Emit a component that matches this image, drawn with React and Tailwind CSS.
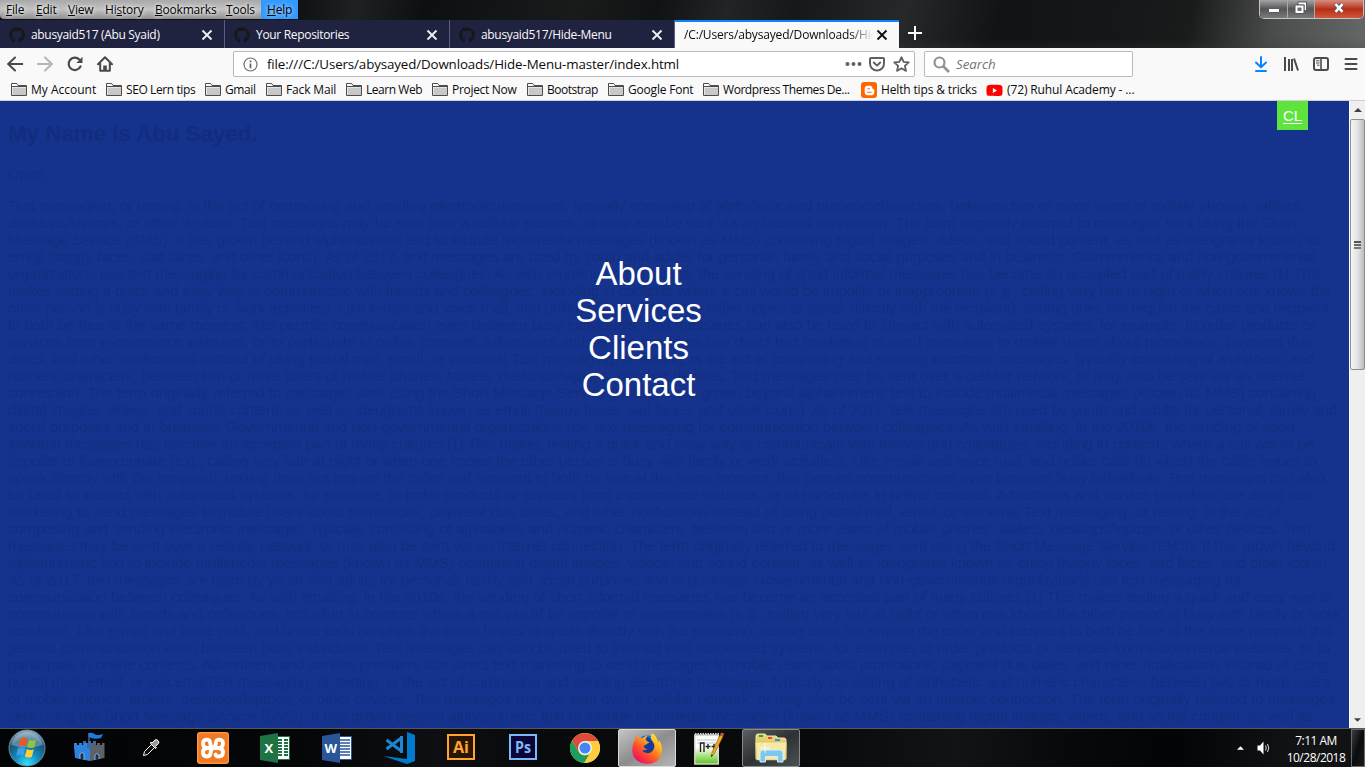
import React from "react";
import { FaGithub, FaYoutube, FaBloggerB } from "react-icons/fa";

const UI = "font-['Open_Sans','Noto_Sans',sans-serif]";

const menus = [
  ["", "F", "ile", "w-[30px]"],
  ["", "E", "dit", "w-[32px]"],
  ["", "V", "iew", "w-[37px]"],
  ["Hi", "s", "tory", "w-[50px]"],
  ["", "B", "ookmarks", "w-[71px]"],
  ["", "T", "ools", "w-[35px]"],
];

const tabs = ["abusyaid517 (Abu Syaid)", "Your Repositories", "abusyaid517/Hide-Menu"];

const bookmarks = [
  ["folder", "My Account", "w-[95px]", "tracking-[0px]"],
  ["folder", "SEO Lern tips", "w-[99px]", "tracking-[-0.4px]"],
  ["folder", "Gmail", "w-[61px]", "tracking-[-0.4px]"],
  ["folder", "Fack Mail", "w-[80px]", "tracking-[-0.15px]"],
  ["folder", "Learn Web", "w-[86px]", "tracking-[-0.45px]"],
  ["folder", "Project Now", "w-[95px]", "tracking-[-0.3px]"],
  ["folder", "Bootstrap", "w-[81px]", "tracking-[-0.5px]"],
  ["folder", "Google Font", "w-[95px]", "tracking-[-0.2px]"],
  ["folder", "Wordpress Themes De...", "w-[158px]", "tracking-[-0.45px]"],
  ["blogger", "Helth tips & tricks", "w-[125px]", "tracking-[-0.15px]"],
  ["youtube", "(72) Ruhul Academy - ...", "w-[160px]", "tracking-[-0.12px]"],
];

// [text, rendered width]
const lines = [
  ["Text messaging, or texting, is the act of composing and sending electronic messages, typically consisting of alphabetic and numeric characters, between two or more users of mobile phones, tablets,", 1295],
  ["desktops/laptops, or other devices. Text messages may be sent over a cellular network, or may also be sent via an Internet connection. The term originally referred to messages sent using the Short", 1289],
  ["Message Service (SMS). It has grown beyond alphanumeric text to include multimedia messages (known as MMS) containing digital images, videos, and sound content, as well as ideograms known as", 1313],
  ["emoji (happy faces, sad faces, and other icons). As of 2017, text messages are used by youth and adults for personal, family and social purposes and in business. Governmental and non-governmental", 1308],
  ["organizations use text messaging for communication between colleagues. As with emailing, in the 2010s, the sending of short informal messages has become an accepted part of many cultures.[1] This", 1313],
  ["makes texting a quick and easy way to communicate with friends and colleagues, including in contexts where a call would be impolite or inappropriate (e.g., calling very late at night or when one knows the", 1323],
  ["other person is busy with family or work activities). Like e-mail and voice mail, and unlike calls (in which the caller hopes to speak directly with the recipient), texting does not require the caller and recipient", 1321],
  ["to both be free at the same moment; this permits communication even between busy individuals. Text messages can also be used to interact with automated systems, for example, to order products or", 1307],
  ["services from e-commerce websites, or to participate in online contests. Advertisers and service providers use direct text marketing to send messages to mobile users about promotions, payment due", 1304],
  ["dates, and other notifications instead of using postal mail, email, or voicemai Text messaging, or texting, is the act of composing and sending electronic messages, typically consisting of alphabetic and", 1306],
  ["numeric characters, between two or more users of mobile phones, tablets, desktops/laptops, or other devices. Text messages may be sent over a cellular network, or may also be sent via an Internet", 1297],
  ["connection. The term originally referred to messages sent using the Short Message Service (SMS). It has grown beyond alphanumeric text to include multimedia messages (known as MMS) containing", 1308],
  ["digital images, videos, and sound content, as well as ideograms known as emoji (happy faces, sad faces, and other icons). As of 2017, text messages are used by youth and adults for personal, family and", 1329],
  ["social purposes and in business. Governmental and non-governmental organizations use text messaging for communication between colleagues. As with emailing, in the 2010s, the sending of short", 1287],
  ["informal messages has become an accepted part of many cultures.[1] This makes texting a quick and easy way to communicate with friends and colleagues, including in contexts where a call would be", 1306],
  ["impolite or inappropriate (e.g., calling very late at night or when one knows the other person is busy with family or work activities). Like e-mail and voice mail, and unlike calls (in which the caller hopes to", 1309],
  ["speak directly with the recipient), texting does not require the caller and recipient to both be free at the same moment; this permits communication even between busy individuals. Text messages can also", 1317],
  ["be used to interact with automated systems, for example, to order products or services from e-commerce websites, or to participate in online contests. Advertisers and service providers use direct text", 1304],
  ["marketing to send messages to mobile users about promotions, payment due dates, and other notifications instead of using postal mail, email, or voicemai Text messaging, or texting, is the act of", 1273],
  ["composing and sending electronic messages, typically consisting of alphabetic and numeric characters, between two or more users of mobile phones, tablets, desktops/laptops, or other devices. Text", 1303],
  ["messages may be sent over a cellular network, or may also be sent via an Internet connection. The term originally referred to messages sent using the Short Message Service (SMS). It has grown beyond", 1327],
  ["alphanumeric text to include multimedia messages (known as MMS) containing digital images, videos, and sound content, as well as ideograms known as emoji (happy faces, sad faces, and other icons).", 1323],
  ["As of 2017, text messages are used by youth and adults for personal, family and social purposes and in business. Governmental and non-governmental organizations use text messaging for", 1234],
  ["communication between colleagues. As with emailing, in the 2010s, the sending of short informal messages has become an accepted part of many cultures.[1] This makes texting a quick and easy way to", 1324],
  ["communicate with friends and colleagues, including in contexts where a call would be impolite or inappropriate (e.g., calling very late at night or when one knows the other person is busy with family or work", 1332],
  ["activities). Like e-mail and voice mail, and unlike calls (in which the caller hopes to speak directly with the recipient), texting does not require the caller and recipient to both be free at the same moment; this", 1325],
  ["permits communication even between busy individuals. Text messages can also be used to interact with automated systems, for example, to order products or services from e-commerce websites, or to", 1322],
  ["participate in online contests. Advertisers and service providers use direct text marketing to send messages to mobile users about promotions, payment due dates, and other notifications instead of using", 1320],
  ["postal mail, email, or voicemaiText messaging, or texting, is the act of composing and sending electronic messages, typically consisting of alphabetic and numeric characters, between two or more users", 1322],
  ["of mobile phones, tablets, desktops/laptops, or other devices. Text messages may be sent over a cellular network, or may also be sent via an Internet connection. The term originally referred to messages", 1327],
  ["sent using the Short Message Service (SMS). It has grown beyond alphanumeric text to include multimedia messages (known as MMS) containing digital images, videos, and sound content, as well as", 1305],
  ["ideograms known as emoji (happy faces, sad faces, and other icons). As of 2017, text messages are used by youth and adults for personal, family and social purposes and in business. Governmental and", 1320],
];

function CloseX({ color }) {
  return (
    <svg width="12" height="12" viewBox="0 0 12 12" className="shrink-0">
      <path d="M1.5 1.5l9 9M10.5 1.5l-9 9" stroke={color} strokeWidth="1.9" fill="none" />
    </svg>
  );
}

function Folder() {
  return (
    <svg width="16" height="16" viewBox="0 0 16 16" className="shrink-0">
      <path d="M.5 13.5V1.5h5.2l1.3 2h8.500v10z" fill="#fff" stroke="#4c4c4c" />
      <path d="M1.500 5.500h13.500v7.500h-13.500z" fill="#c8c8c8" />
      <path d="M.5 4.500h15" stroke="#4c4c4c" />
    </svg>
  );
}

function WindowButtons() {
  return (
    <div className="flex h-[19px] w-[105px] overflow-hidden rounded-b-[5px] border border-t-0 border-[#c4c4c4] bg-[#222]">
      <div className="flex w-[28px] items-end justify-center border-r border-[#aaa] bg-linear-to-b from-[#a5a5a5] via-[#555] to-[#7a7a7a] pb-[5px]">
        <div className="h-[5px] w-[12px] rounded-[1px] border border-[#555866] bg-white" />
      </div>
      <div className="flex w-[27px] items-center justify-center border-r border-[#aaa] bg-linear-to-b from-[#a5a5a5] via-[#555] to-[#7a7a7a]">
        <svg width="14" height="14" viewBox="0 0 14 14" className="mb-[2px]">
          <path d="M4 1h8.500v8.500H10V4H4z" fill="#fff" stroke="#555866" />
          <rect x="1" y="4" width="9" height="8.500" fill="#fff" stroke="#555866" />
          <rect x="4" y="7" width="3" height="2.500" fill="#777" stroke="#555866" strokeWidth=".8" />
        </svg>
      </div>
      <div className="flex flex-1 items-center justify-center bg-linear-to-b from-[#d58c80] via-[#b52c12] to-[#d0563a]">
        <svg width="12" height="12" viewBox="0 0 14 13" className="mb-[3px]">
          <path d="M3 2l8 9M11 2l-8 9" stroke="#555866" strokeWidth="5" />
          <path d="M3 2l8 9M11 2l-8 9" stroke="#fff" strokeWidth="3" />
        </svg>
      </div>
    </div>
  );
}

function TitleArea() {
  return (
    <div className="flex h-[48px] shrink-0 flex-col bg-[linear-gradient(100deg,#0b0f10_0%,#0b0f10_21%,#1e2121_26%,#0c1011_31%,#191b1b_42%,#101313_48%,#222426_53%,#15181a_58%,#262829_66%,#101415_73%,#141819_82%,#1a1b1b_87%,#4a4c4c_93%,#666868_100%)] shadow-[inset_0_-10px_8px_-6px_rgba(60,60,60,0.3)]">
      <div className="flex h-[20px] items-start justify-between">
        <div className={`${UI} flex h-[19px] text-[12px] leading-[19px] tracking-[-0.2px] text-black`}>
          <div className="flex w-[261px] rounded-bl-[4px] bg-linear-to-b from-[#a9a9a9] via-[#c2c2c2] to-[#8e8e8e] pl-[6px] [text-shadow:0_0_5px_#fff,0_0_3px_#ddd]">
            {menus.map(([pre, key, rest, w]) => (
              <div key={key} className={`${w} shrink-0 whitespace-nowrap`}>
                {pre}
                <span className="underline">{key}</span>
                {rest}
              </div>
            ))}
          </div>
          <div className="w-[37px] bg-[#3399ff] pl-[6px] [text-shadow:0_0_5px_#fff]">
            <span className="underline">H</span>elp
          </div>
        </div>
        <div className="pr-px">
          <WindowButtons />
        </div>
      </div>
      <div className={`${UI} flex h-[28px] text-[12px]`}>
        {tabs.map((t) => (
          <div key={t} className="flex w-[225px] items-center border-r border-[#5d5f7c] bg-[#202340] pt-px pr-[11px] pl-[9px] text-[#f9f9fa]">
            <FaGithub size={16} color="#17171b" className="mr-[6px]" />
            <span className="flex-1 text-[12px] font-medium tracking-[-0.32px] whitespace-nowrap">{t}</span>
            <CloseX color="#f0f0f4" />
          </div>
        ))}
        <div className="flex w-[224px] items-center border-t-2 border-[#0a84ff] bg-[#f9f9fa] pr-[11px] pl-[9px]">
          <span className="mr-[3px] flex-1 overflow-hidden mask-r-from-88% text-[12px] tracking-[-0.16px] whitespace-nowrap text-[#0c0c0d]">/C:/Users/abysayed/Downloads/Hide-Menu</span>
          <CloseX color="#111" />
        </div>
        <svg width="30" height="28" viewBox="0 0 30 28">
          <path d="M16 6v14M9 13h14" stroke="#fff" strokeWidth="2" />
        </svg>
      </div>
    </div>
  );
}

function Toolbar() {
  const s = { fill: "none", stroke: "#4a4a4d", strokeWidth: 2, strokeLinecap: "round", strokeLinejoin: "round" };
  return (
    <div className={`${UI} flex h-[53px] shrink-0 flex-col border-b border-[#d0d0d0] bg-[#f9f9fa]`}>
      <div className="flex h-[32px] items-center">
        <div className="flex w-[233px] items-center gap-[14px] pl-[7px]">
          <svg width="16" height="16" viewBox="0 0 16 16"><path d="M15.500 8H1M8 1.500L1.200 8 8 14.500" {...s} /></svg>
          <svg width="16" height="16" viewBox="0 0 16 16"><path d="M.5 8H15M8 1.500L14.800 8 8 14.500" {...s} stroke="#b4b4b6" /></svg>
          <svg width="16" height="16" viewBox="0 0 16 16">
            <path d="M13.500 10.500A6.200 6.200 0 1 1 12.300 3.500" {...s} strokeWidth="2.200" />
            <path d="M15.500.8v6.200H9.300z" fill="#4a4a4d" />
          </svg>
          <svg width="16" height="16" viewBox="0 0 16 16">
            <path d="M1 8.200L8 1.200l7 7M3.200 7.500v7.300h9.600V7.500" {...s} />
            <path d="M6.200 14.500v-5h3.600v5z" fill="#4a4a4d" />
          </svg>
        </div>
        <div className="flex h-[26px] w-[682px] items-center rounded-[2px] border border-[#b9b9bb] bg-white pr-[4px] pl-[9px]">
          <svg width="15" height="15" viewBox="0 0 15 15">
            <circle cx="7.500" cy="7.500" r="6.500" fill="none" stroke="#707073" strokeWidth="1.200" />
            <path d="M7.500 6.500v4.800M7.500 3.500v1.700" stroke="#606063" strokeWidth="1.700" />
          </svg>
          <span className="ml-[9px] flex-1 pt-[2px] text-[13.33px] tracking-[-0.12px] whitespace-nowrap text-[#0c0c0d]">file:///C:/Users/abysayed/Downloads/Hide-Menu-master/index.html</span>
          <svg width="17" height="16" viewBox="0 0 17 16" className="mr-[7px]">
            <g fill="#606063"><circle cx="2.500" cy="8" r="2" /><circle cx="8.500" cy="8" r="2" /><circle cx="14.500" cy="8" r="2" /></g>
          </svg>
          <svg width="16" height="16" viewBox="0 0 16 16" className="mr-[8px]">
            <path d="M2 2h12q1 0 1 1v4.500a7 7 0 0 1-14 0V3q0-1 1-1z" {...s} stroke="#606063" />
            <path d="M4.800 6.500L8 9.600l3.200-3.100" {...s} stroke="#606063" />
          </svg>
          <svg width="17" height="16" viewBox="0 0 17 16">
            <path d="M8.500 1.200l2.100 4.700 5.100.5-3.800 3.500 1.100 5-4.500-2.600-4.500 2.600 1.100-5L1.300 6.400l5.100-.5z" {...s} stroke="#606063" strokeWidth="1.800" />
          </svg>
        </div>
        <div className="ml-[9px] flex h-[26px] w-[209px] items-center rounded-[2px] border border-[#b9b9bb] bg-white pl-[8px]">
          <svg width="17" height="17" viewBox="0 0 17 17">
            <circle cx="6.500" cy="6.500" r="5" fill="none" stroke="#929294" strokeWidth="2.200" />
            <path d="M10 10l6 6" stroke="#929294" strokeWidth="2.600" />
          </svg>
          <span className="ml-[6px] pt-[2px] text-[13.33px] tracking-[-0.05px] text-[#737376] italic">Search</span>
        </div>
        <div className="ml-auto flex items-center gap-[14px] pr-[6px]">
          <svg width="16" height="16" viewBox="0 0 16 16">
            <path d="M8 1v10M3 6.500l5 4.800 5-4.800M3 15h10" {...s} stroke="#0a84ff" />
          </svg>
          <svg width="16" height="16" viewBox="0 0 16 16">
            <path d="M2 1v14M6 3v12M9 3v12M11 2.500L15 14.500" {...s} strokeLinecap="butt" />
          </svg>
          <svg width="16" height="16" viewBox="0 0 16 16">
            <rect x="1" y="2" width="14" height="12" rx="2" {...s} />
            <path d="M8 2v12" {...s} strokeWidth="1.600" />
            <path d="M3 4.800h3.500M3 7h3.500M4 9.200h2.500" stroke="#4a4a4d" strokeWidth="1" />
          </svg>
          <svg width="16" height="16" viewBox="0 0 16 16"><path d="M2.500 3h11M2.500 8h11M2.500 13h11" {...s} /></svg>
        </div>
      </div>
      <div className="flex h-[20px] items-center pl-[11px] text-[12px] text-[#0c0c0d]">
        {bookmarks.map(([kind, text, w, tr]) => (
          <div key={text} className={`${w} flex shrink-0 items-center`}>
            {kind === "folder" && <Folder />}
            {kind === "blogger" && (
              <span className="flex size-[16px] shrink-0 items-center justify-center rounded-[3px] bg-[#ff6600]">
                <FaBloggerB size={11} color="#fff" />
              </span>
            )}
            {kind === "youtube" && <FaYoutube size={17} color="#f00" className="shrink-0 bg-[radial-gradient(circle,#fff_3px,transparent_4px)]" />}
            <span className={`ml-[4px] whitespace-nowrap ${tr}`}>{text}</span>
          </div>
        ))}
      </div>
    </div>
  );
}

function Page() {
  return (
    <div className="relative h-[627px] flex-1 overflow-hidden bg-[#15338c] font-['Liberation_Sans',Arial,sans-serif]">
      <div className="pl-[8px] text-[15px] leading-[17px] text-[#132e81]">
        <h2 className="pt-[19px] text-[22.5px] leading-[27px] font-bold tracking-[-0.1px] text-[#122c7e]">My Name is Abu Sayed.</h2>
        <p className="pt-[18px]">Open</p>
        <div className="pt-[15px]">
          {lines.map(([t, w], i) => (
            <div key={i} className="h-[17px] text-justify tracking-[-0.15px] whitespace-nowrap [text-align-last:justify]" style={{ width: w }}>
              {t}
            </div>
          ))}
        </div>
      </div>
      <div className="absolute top-0 left-[1277px] flex h-[29px] w-[31px] justify-center bg-[#5ee43c] pt-[5px] text-[15px] leading-[20px] text-white">
        <a className="underline underline-offset-[2px]">CL</a>
      </div>
      <nav className="absolute top-[154px] left-0 flex w-[1277px] flex-col text-center text-[33px] leading-[37px] text-white">
        <a>About</a>
        <a>Services</a>
        <a>Clients</a>
        <a>Contact</a>
      </nav>
    </div>
  );
}

function Scrollbar() {
  return (
    <div className="flex w-[16px] shrink-0 flex-col items-center border-l border-white bg-[#efefef]">
      <div className="flex h-[18px] items-center">
        <svg width="8" height="4" viewBox="0 0 8 4"><path d="M4 0l4 4H0z" fill="#404040" /></svg>
      </div>
      <div className="flex h-[251px] w-[15px] items-center justify-center rounded-[2px] border border-[#8e8e8e] bg-linear-to-r from-[#f5f5f5] via-[#e4e4e6] to-[#bcbcc0]">
        <div className="flex flex-col gap-[1px]">
          <div className="h-[2px] w-[7px] bg-[#555]" />
          <div className="h-[2px] w-[7px] bg-[#666]" />
          <div className="h-[2px] w-[7px] bg-[#777]" />
        </div>
      </div>
      <div className="mt-auto flex h-[17px] items-center">
        <svg width="7" height="4" viewBox="0 0 8 4"><path d="M0 0h8L4 4z" fill="#404040" /></svg>
      </div>
    </div>
  );
}

function StartOrb() {
  return (
    <svg width="38" height="38" viewBox="0 0 38 38">
      <defs>
        <radialGradient id="orb" cx=".5" cy=".95" r=".95">
          <stop offset="0" stopColor="#35e0ff" />
          <stop offset=".35" stopColor="#138fc4" />
          <stop offset=".7" stopColor="#1c5478" />
          <stop offset="1" stopColor="#93b6c8" />
        </radialGradient>
      </defs>
      <circle cx="19" cy="19" r="18" fill="url(#orb)" stroke="#6c8797" />
      <path d="M3.500 16a15.800 15.800 0 0 1 31 0q-15 5-31 0z" fill="#fff" opacity=".28" />
      <path d="M12.500 9.500q3.500-2 7 .3l-1.700 7.700q-3.500-2-7.300-.3z" fill="#e8592a" />
      <path d="M21 10.500q3.500 2 7.200.2l-1.900 7.500q-3.500 1.800-7-.2z" fill="#8cc540" />
      <path d="M10 19q3.700-1.700 7.300.3l-1.900 7.500q-3.500-2-7.200-.3z" fill="#3f9fe0" />
      <path d="M18.800 20q3.500 2 7 .2l-1.900 7.500q-3.500 1.800-7-.2z" fill="#ffd03a" />
    </svg>
  );
}

function Castle() {
  return (
    <svg width="32" height="30" viewBox="0 0 32 30" className="mb-[3px]">
      <path d="M16 9V1" stroke="#5d8fc0" />
      <path d="M15.500 1q4-1 6 1t8.500 0l-2 4q-7 2-12.500-1z" fill="#1f7ae0" />
      <path d="M10 12V9h3v2h2V9h3v2h2V9h3v16H10z" fill="#3c6aa0" />
      <path d="M1 15v-4h3v2h2v-2h3v2h2v-2h3v5l3 1v12L2 26z" fill="#2f83de" />
      <path d="M17 29V17l2-1v-5h3v2h2v-2h3v2h2v-2h2.500v15z" fill="#5c6068" />
      <path d="M7 27v-5q2-3 4 0v6M22 28v-5q2-3 4 0v4" fill="#172f55" stroke="#9fc5ee" strokeWidth=".8" />
    </svg>
  );
}

function Dropper() {
  return (
    <svg width="18" height="18" viewBox="0 0 18 18">
      <path d="M1.500 16.500l1-4 7-7 3 3-7 7z" fill="#111" stroke="#fff" />
      <path d="M8.500 4.500l5 5 1-1-1-1 3-3q1-1.500-.5-3t-3-.5l-3 3-1-1z" fill="#999" stroke="#fff" strokeWidth="1" />
    </svg>
  );
}

function Xampp() {
  return (
    <svg width="32" height="32" viewBox="0 0 32 32">
      <rect width="32" height="32" rx="3" fill="#f07a22" />
      <rect x=".7" y=".7" width="30.600" height="30.600" rx="2.500" fill="none" stroke="#f9a35d" />
      <g fill="none" stroke="#fff" strokeWidth="3.800" strokeLinejoin="round" strokeLinecap="round">
        <path d="M16 16q-3-2-3-6-.5-2.500-3.500-2.300Q6 8 6 11.500q0 4.500 5 4.500h10q5 0 5-4.500 0-3.500-3.500-3.800Q19.500 7.500 19 10q0 4-3 6" />
        <path d="M16 16q-2.500 1.500-2.500 5.500Q13 24.500 10 24.500q-4 0-4-4Q6 16 11 16M21 16q5 0 5 4.500 0 4-4.500 4-2.500 0-3-2" />
      </g>
    </svg>
  );
}

function Office({ letter, color, grid }) {
  return (
    <svg width="30" height="30" viewBox="0 0 30 30">
      <rect x="16" y="3.500" width="13.500" height="23" fill="#fff" stroke={color} />
      {grid ? (
        <path d="M18 7h4M24 7h4M18 10h4M24 10h4M18 13h4M24 13h4M18 16h4M24 16h4M18 19h4M24 19h4M18 22h4M24 22h4" stroke={color} strokeWidth="2" />
      ) : (
        <path d="M18 7h10M18 10h10M18 13h10M18 16h10M18 19h10M18 22h10" stroke={color} strokeWidth="1.400" />
      )}
      <path d="M0 3l18-3v30L0 27z" fill={color} />
      <text x="8.800" y="20" textAnchor="middle" fontFamily="Open Sans, sans-serif" fontWeight="700" fontSize="13" fill="#fff">{letter}</text>
    </svg>
  );
}

function VsCode() {
  return (
    <svg width="32" height="32" viewBox="0 0 32 32">
      <path d="M24 0l8 3v26l-8 3L0 24l24 3z" fill="#007acc" />
      <path d="M3.500 8L19 19.500M3.500 17L19 5.500" stroke="#1a86d8" strokeWidth="3" fill="none" />
      <path d="M18.500 4v17" stroke="#1a86d8" strokeWidth="3" />
    </svg>
  );
}

function Adobe({ text, fg, bg }) {
  return (
    <svg width="28" height="26" viewBox="0 0 28 26">
      <rect x="1" y="1" width="26" height="24" fill={bg} stroke={fg} strokeWidth="2" />
      <text x="14" y="19" textAnchor="middle" fontFamily="Open Sans, sans-serif" fontWeight="700" fontSize="16" textLength="16" lengthAdjust="spacingAndGlyphs" fill={fg}>{text}</text>
    </svg>
  );
}

function Chrome() {
  return (
    <svg width="30" height="30" viewBox="0 0 30 30">
      <circle cx="15" cy="15" r="15" fill="#ffcd40" />
      <path d="M15 15L8.500 18.700 2 7.500A15 15 0 0 1 28 8H15z" fill="#dd4b3e" />
      <path d="M2 7.500l6.500 11.200Q11 22.500 15 22.500l4-1L14.300 30A15 15 0 0 1 2 7.500z" fill="#1a9f5c" />
      <path d="M15 8h13.200a15 15 0 0 1-14 22l7.200-11.500z" fill="#ffcd40" />
      <circle cx="15" cy="15" r="7" fill="#f3f3f3" />
      <circle cx="15" cy="15" r="5.500" fill="#4486f5" />
    </svg>
  );
}

function Firefox() {
  return (
    <svg width="30" height="31" viewBox="0 0 30 31">
      <defs>
        <linearGradient id="fox" x1=".9" y1="0" x2=".2" y2=".9">
          <stop offset="0" stopColor="#fff04a" />
          <stop offset=".35" stopColor="#ffb01e" />
          <stop offset=".65" stopColor="#ff5a26" />
          <stop offset="1" stopColor="#f2115e" />
        </linearGradient>
      </defs>
      <circle cx="15" cy="14" r="11.500" fill="#0b6de0" />
      <path d="M15 4q6 2 7 8t-4 9q-5 0-7-2z" fill="#173a95" />
      <path d="M20 0q-3 5 1 9 3 4 0 8.500-3 4-8 2-3-1-3-2.500 3 1 5.500-1-4-.5-4-3 .5-1.500 3-1.500 1-1.500 3-2-2.500-1-4-3 .5-2 2.500-4Q12.500 3 10.500 5 8 4.200 6.500 5 5 4 4.800 1.500 2.500 4 3 7 0 12 .2 17q1 13 15 14 13.800-.5 14.800-14Q30 11 27 7q0 2-.5 2.500Q24 2 20 0z" fill="url(#fox)" />
    </svg>
  );
}

function Notepad() {
  return (
    <svg width="30" height="33" viewBox="0 0 30 33">
      <defs>
        <linearGradient id="np" x1="0" y1="0" x2="0" y2="1">
          <stop offset=".4" stopColor="#fff" />
          <stop offset="1" stopColor="#5fc51a" />
        </linearGradient>
      </defs>
      <rect x=".8" y="3" width="23.500" height="29" fill="url(#np)" stroke="#d8d8d8" strokeWidth="1.400" />
      <path d="M1 2.500h24" stroke="#ccc" strokeWidth="3" strokeDasharray="1.500 1" />
      <path d="M3 8h19M3 11h19" stroke="#a9c9ce" />
      <path d="M6.500 20v-9h3.500v9M11.500 14.500h5M14 12v5M17.500 14.500h5M20 12v5" fill="none" stroke="#222" strokeWidth="1.400" />
      <path d="M17 25l1.200-5L26 3l3 1.500-8.500 17z" fill="#f3a824" stroke="#8a5212" strokeWidth=".6" />
      <path d="M26 3l1.200-2.500 3 1.200L29 4.500z" fill="#c3544c" />
      <path d="M17 25l.6-2.500 1.500.8z" fill="#222" />
    </svg>
  );
}

function Explorer() {
  return (
    <svg width="34" height="30" viewBox="0 0 34 30">
      <path d="M2 3q0-2 2-2h7l2 2h9l2 2h6q2 0 2 2v19H2z" fill="#e9ce72" stroke="#f6e6a4" />
      <rect x="5" y="2" width="4" height="2" fill="#16b22c" />
      <rect x="14" y="4" width="4" height="2" fill="#e34b28" />
      <rect x="21" y="6" width="5" height="2" fill="#2c91e8" />
      <path d="M1.500 9h30q1 0 1 1l-1 17H2.500z" fill="#f8e8a5" stroke="#d2b560" strokeWidth=".6" />
      <path d="M6 29V20q0-3 3-3h17q3 0 3 3v9h-5.500v-5.500H11.500V29z" fill="#7cc8ea" stroke="#d3f0fb" />
      <path d="M11 10v10M6 15h10" stroke="#fff" opacity=".8" />
    </svg>
  );
}

function Slot({ children, active }) {
  const base = "flex h-[38px] w-[62px] shrink-0 items-center justify-center ";
  if (!active) return <div className={base}>{children}</div>;
  return (
    <div className={base}>
      <div className={`flex h-[38px] w-[58px] items-center justify-center rounded-[2px] border ${active}`}>{children}</div>
    </div>
  );
}

function Taskbar() {
  return (
    <div className="flex h-[39px] shrink-0 items-start border-t border-[#55575a] bg-[linear-gradient(90deg,#030405_0%,#050607_22%,#0d0f12_32%,#07090b_40%,#090a0c_60%,#121315_70%,#08090a_78%,#030405_86%,#131415_96%,#101112_100%)]">
      <div className="flex w-[58px] items-center pl-[8px]"><StartOrb /></div>
      <Slot><Castle /></Slot>
      <Slot><Dropper /></Slot>
      <Slot><Xampp /></Slot>
      <Slot><Office letter="X" color="#1f7244" grid /></Slot>
      <Slot><Office letter="W" color="#2a5699" /></Slot>
      <Slot><VsCode /></Slot>
      <Slot><div className="pb-[3px]"><Adobe text="Ai" fg="#ffa52d" bg="#2a1500" /></div></Slot>
      <Slot><div className="pb-[3px]"><Adobe text="Ps" fg="#7db8f5" bg="#0b0538" /></div></Slot>
      <Slot><Chrome /></Slot>
      <Slot active="border-[#d9d9d9] bg-linear-to-br from-[#c5c5c5] via-[#8d8d8d] to-[#b5b5b5]"><Firefox /></Slot>
      <Slot><Notepad /></Slot>
      <Slot active="border-[#84888b] bg-linear-to-br from-[#5a5e61] via-[#2d3235] to-[#4a5053]"><Explorer /></Slot>
      <div className="ml-auto flex h-[38px] items-center">
        <svg width="7" height="4" viewBox="0 0 8 4" className="mr-[13px]"><path d="M4 0l4 4H0z" fill="#fff" /></svg>
        <svg width="15" height="14" viewBox="0 0 15 14" className="mr-[14px]">
          <path d="M.5 4.500h2.500L6.500.5v13L3 9.500H.5z" fill="#fff" />
          <path d="M8.500 4.500q1.500 2.500 0 5M10.500 3q2.500 4 0 8" fill="none" stroke="#ddd" strokeWidth="1" />
        </svg>
        <div className={`${UI} w-[60px] pt-px text-center text-[12px] leading-[17px] tracking-[-0.5px] whitespace-nowrap text-white`}>
          <div>7:11 AM</div>
          <div>10/28/2018</div>
        </div>
        <div className="ml-[5px] h-[38px] w-[14px] border border-[#66686a] bg-linear-to-br from-[#3c3e40] via-[#0b0c0d] to-[#191b1c]" />
      </div>
    </div>
  );
}

export default function App() {
  return (
    <div className="flex h-[767px] w-[1365px] flex-col overflow-hidden bg-black">
      <TitleArea />
      <Toolbar />
      <div className="flex h-[627px] shrink-0">
        <Page />
        <Scrollbar />
      </div>
      <Taskbar />
    </div>
  );
}
